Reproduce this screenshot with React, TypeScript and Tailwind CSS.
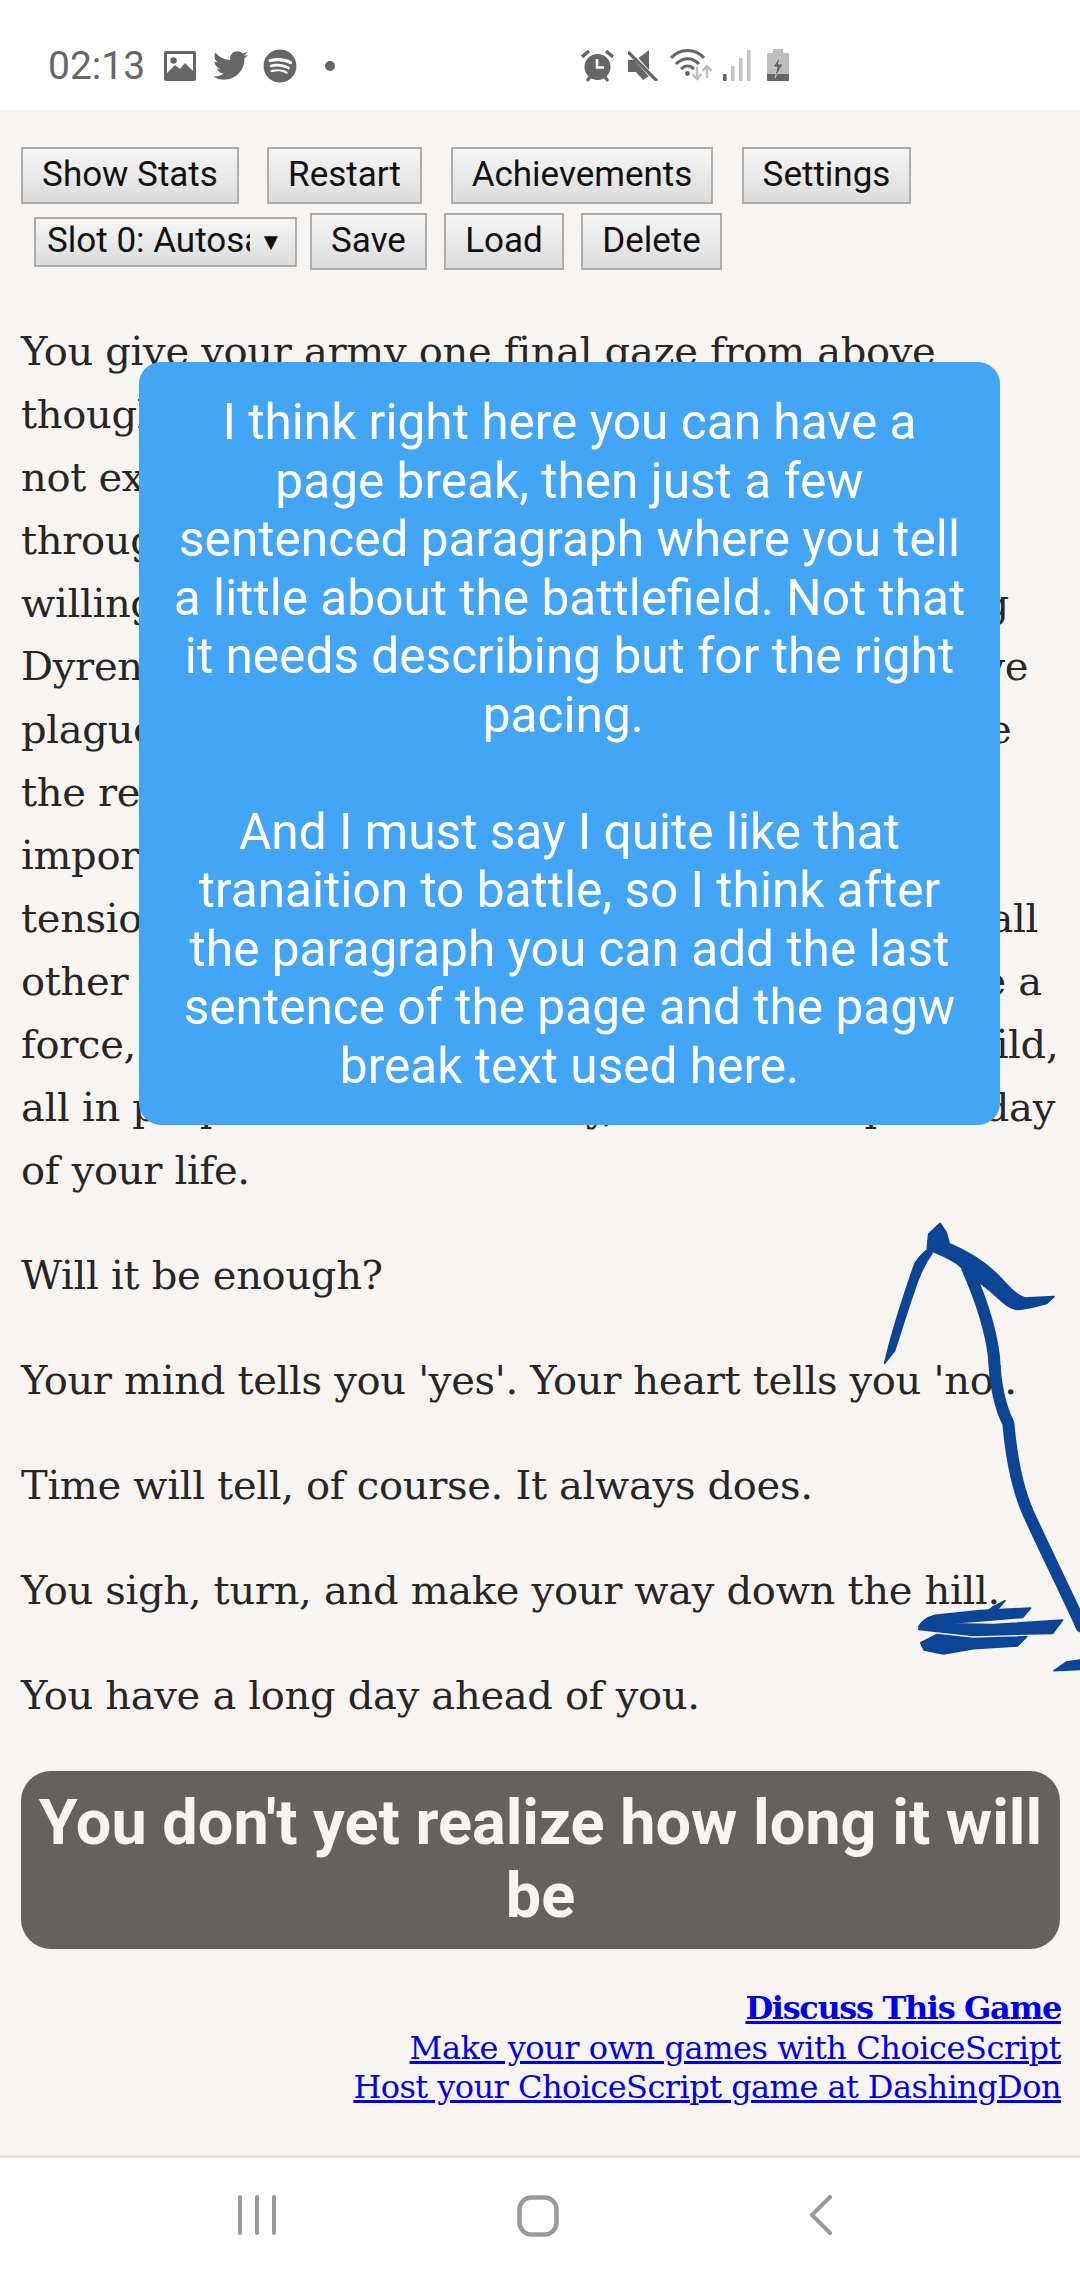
import { FaSpotify, FaTwitter } from "react-icons/fa";

const storyLines = [
  "You give your army one final gaze from above",
  "though you know there is little more you can do.",
  "not exactly a comforting sight, but you have",
  "through enough battles to know the value of",
  "willing men to stand and fight. From the massing",
  "Dyrenian legions, to the mercenaries, who survive",
  "plague, and the hungry levies who'd stand beside",
  "the remnants of every army you have called",
  "important enough to lend you their swords,",
  "tension of the coming day has met you, one and all",
  "other than the sly old hands. Together they make a",
  "force, perhaps the finest the lord has seen, to build,",
  "all in preparation for this day, the most impulse day",
  "of your life.",
];

const paragraphs = [
  "Will it be enough?",
  "Your mind tells you 'yes'. Your heart tells you 'no'.",
  "Time will tell, of course. It always does.",
  "You sigh, turn, and make your way down the hill.",
  "You have a long day ahead of you.",
];

const btn =
  "h-[57px] border-2 border-[#adadad] bg-gradient-to-b from-[#f6f6f6] to-[#dcdcdc] text-[35px] text-[#111] flex items-center justify-center";

function StatusBar() {
  return (
    <div className="h-[110px] bg-white flex items-start pl-[48px] pt-[48px] text-[#666]">
      <span className="text-[39px] leading-[36px] w-[116px] font-['Roboto',sans-serif]">02:13</span>
      {/* image */}
      <svg width="32" height="30" viewBox="0 0 32 30" className="mt-[3px]">
        <rect width="32" height="30" rx="2" fill="#666" />
        <rect x="3" y="3" width="26" height="24" fill="#fff" />
        <circle cx="9.5" cy="9.5" r="3.2" fill="#666" />
        <path d="M3 22 L11 14 L16 18 L21 12 L29 20 V27 H3 Z" fill="#666" />
      </svg>
      <FaTwitter size={35} className="ml-[17px]" color="#666" />
      <FaSpotify size={34} className="ml-[15px] mt-[1px]" color="#666" />
      <span className="ml-[28px] mt-[13px] w-[10px] h-[10px] rounded-full bg-[#666]" />

      <div className="ml-[246px] flex items-start">
        {/* alarm */}
        <svg width="33" height="32" viewBox="0 0 33 32" className="mt-[2px]">
          <circle cx="16.5" cy="17" r="13" fill="#666" />
          <path d="M16 9 V17.5 H23" stroke="#fff" strokeWidth="2.6" fill="none" />
          <path d="M1 7 L8 1 M32 7 L25 1" stroke="#666" strokeWidth="3.4" />
          <path d="M6 31 L9 27 M27 31 L24 27" stroke="#666" strokeWidth="3" />
        </svg>
        {/* muted speaker */}
        <svg width="30" height="31" viewBox="0 0 30 31" className="ml-[14px] mt-[2px]">
          <path d="M0 10 H8 L21 0 V26 L15 30 L8 22 H0 Z" fill="#666" />
          <path d="M1 1 L28 31" stroke="#fff" strokeWidth="4.5" />
          <path d="M0 2 L29 31" stroke="#666" strokeWidth="3.2" />
        </svg>
        {/* wifi */}
        <svg width="42" height="34" viewBox="0 0 42 34" className="ml-[12px]">
          <path d="M1 10 C10 0 25 0 34 10" stroke="#666" strokeWidth="3.2" fill="none" />
          <path d="M6 16 C13 9 22 9 29 16" stroke="#666" strokeWidth="3" fill="none" />
          <path d="M11 21 C15 17 20 17 24 21" stroke="#666" strokeWidth="2.8" fill="none" />
          <circle cx="17.5" cy="25.5" r="2.4" fill="#666" />
          <path d="M27 19 V30 M22.5 26 L27 31 L31.5 26" stroke="#bdbdbd" strokeWidth="2.4" fill="none" />
          <path d="M37 30 V19 M32.5 23 L37 18 L41.5 23" stroke="#bdbdbd" strokeWidth="2.4" fill="none" />
        </svg>
        {/* signal */}
        <svg width="28" height="31" viewBox="0 0 28 31" className="ml-[11px] mt-[2px]">
          <rect x="0" y="24" width="3.6" height="7" rx="1" fill="#666" />
          <rect x="8" y="16" width="3.6" height="15" rx="1" fill="#c4c4c4" />
          <rect x="16" y="8" width="3.6" height="23" rx="1" fill="#c4c4c4" />
          <rect x="24" y="0" width="3.6" height="31" rx="1" fill="#c4c4c4" />
        </svg>
        {/* battery */}
        <svg width="22" height="32" viewBox="0 0 22 32" className="ml-[16px] mt-[1px]">
          <path d="M6 0 H16 V4 H21 Q22 4 22 5 V25 H0 V5 Q0 4 1 4 H6 Z" fill="#bdbdbd" />
          <path d="M0 25 H22 V31 Q22 32 21 32 H1 Q0 32 0 31 Z" fill="#666" />
          <path d="M13 7 L6 18 H10 L8 29 L16 15 H11.5 Z" fill="#666" stroke="#e8e8e8" strokeWidth="0.6" />
        </svg>
      </div>
    </div>
  );
}

function Toolbar() {
  return (
    <div className="font-['Roboto',sans-serif]">
      <div className="flex pt-[37px] pl-[21px]">
        <div className={`${btn} w-[218px]`}>Show Stats</div>
        <div className={`${btn} w-[155px] ml-[28px]`}>Restart</div>
        <div className={`${btn} w-[262px] ml-[29px]`}>Achievements</div>
        <div className={`${btn} w-[169px] ml-[29px]`}>Settings</div>
      </div>
      <div className="flex items-center pt-[9px] pl-[34px]">
        <div className="h-[50px] w-[263px] border-2 border-[#adadad] bg-gradient-to-b from-[#f6f6f6] to-[#dcdcdc] text-[35px] text-[#111] flex items-center pl-[11px]">
          <span className="w-[203px] overflow-hidden whitespace-nowrap">Slot 0: Autosave</span>
          <span className="ml-[9px] text-[24px] leading-none">▼</span>
        </div>
        <div className={`${btn} w-[117px] ml-[13px]`}>Save</div>
        <div className={`${btn} w-[120px] ml-[17px]`}>Load</div>
        <div className={`${btn} w-[141px] ml-[17px]`}>Delete</div>
      </div>
    </div>
  );
}

function Scribble() {
  return (
    <svg
      viewBox="0 0 660 1440"
      className="absolute left-[860px] top-[1200px] w-[220px] h-[480px]"
      fill="#0c4496"
      stroke="#0c4496"
      strokeWidth="5"
      strokeLinejoin="round"
      strokeLinecap="round"
    >
      {/* left arm */}
      <path d="M74 490 C95 400 130 290 165 190 Q185 160 208 145 L216 160 Q192 192 172 245 C147 315 122 395 104 452 Z" />
      {/* tip */}
      <path d="M202 145 L206 102 L240 70 L258 96 L268 132 L240 128 Z" />
      {/* right arm */}
      <path d="M206 150 Q235 122 270 132 C325 155 380 190 420 232 C445 258 465 285 495 294 L582 290 L560 310 C530 318 500 328 468 328 C440 322 420 298 390 272 C355 245 320 215 290 190 Q250 165 206 150 Z" />
      {/* shaft */}
      <path
        d="M322 205 C355 280 390 370 402 470 C405 545 415 610 445 670 C452 750 465 850 505 940 C555 1050 615 1170 665 1280"
        fill="none"
        strokeWidth="36"
      />
      {/* strokes at the foot */}
      <path d="M176 1280 Q190 1256 225 1246 L360 1232 L512 1224 L488 1252 L370 1262 L230 1272 Z" />
      <path d="M190 1270 L400 1274 L608 1260 L578 1300 L340 1306 L176 1288 Z" />
      <path d="M182 1328 L230 1304 L340 1316 L500 1310 L472 1338 L340 1346 L250 1362 L192 1350 Z" />
      <path d="M358 1254 L400 1220 L435 1202 L415 1225 L405 1254 Z" />
      <path d="M582 1412 L620 1386 L660 1380 L660 1408 Z" />
    </svg>
  );
}

function NavBar() {
  return (
    <div className="h-[125px] bg-white border-t-[3px] border-[#e0e0e0] flex justify-center items-start pt-[37px]">
      <svg width="40" height="40" viewBox="0 0 40 40" className="-ml-[10px]">
        <path d="M3 2 V38 M20 2 V38 M37 2 V38" stroke="#999" strokeWidth="4" strokeLinecap="round" />
      </svg>
      <svg width="42" height="42" viewBox="0 0 42 42" className="ml-[240px]">
        <rect x="2.5" y="2.5" width="37" height="37" rx="12" fill="none" stroke="#999" strokeWidth="4.5" />
      </svg>
      <svg width="24" height="40" viewBox="0 0 24 40" className="ml-[250px]">
        <path d="M21 2 L3 20 L21 38" fill="none" stroke="#999" strokeWidth="4" strokeLinecap="round" />
      </svg>
    </div>
  );
}

export default function App() {
  return (
    <div className="relative w-[1080px] h-[2280px] overflow-hidden bg-[#f7f4f1] flex flex-col">
      <StatusBar />
      <div className="flex-1">
        <Toolbar />

        <div className="mt-[50px] px-[21px] text-[40px] leading-[63px] text-[#262626] font-['DejaVu_Serif',serif] tracking-[-0.3px]">
          {storyLines.map((line) => (
            <span key={line} className="block whitespace-nowrap">
              {line}
            </span>
          ))}
          {paragraphs.map((p) => (
            <p key={p} className="mt-[42px] whitespace-nowrap">
              {p}
            </p>
          ))}
        </div>

        <div className="ml-[21px] mr-[20px] mt-[44px] h-[178px] rounded-[30px] bg-[#636260] text-[#f7f4f1] text-center font-['Roboto',sans-serif] font-bold text-[63px] leading-[73px] px-[10px] py-[15px]">
          You don't yet realize how long it will be
        </div>

        <div className="mt-[40px] pr-[19px] text-right text-[32px] leading-[39.5px] text-[#0000ee] underline font-['DejaVu_Serif',serif] tracking-[-0.55px]">
          <div className="font-bold tracking-[-1.35px]">Discuss This Game</div>
          <div className="tracking-[-0.45px]">Make your own games with ChoiceScript</div>
          <div>Host your ChoiceScript game at DashingDon</div>
        </div>
      </div>
      <NavBar />

      <Scribble />

      {/* comment popup over the story */}
      <div className="absolute left-[139px] top-[362px] w-[861px] h-[763px] rounded-[22px] bg-[#42a5f5] text-white text-center font-['Roboto',sans-serif] text-[49.6px] leading-[58.5px] px-[30px] pt-[31px]">
        I think right here you can have a page break, then just a few sentenced paragraph where you tell a little about the battlefield. Not that it needs describing but for the right pacing.{"\u00a0"}
        <br />
        <br />
        And I must say I quite like that tranaition to battle, so I think after the paragraph you can add the last sentence of the page and the pagw break text used here.
      </div>
    </div>
  );
}
